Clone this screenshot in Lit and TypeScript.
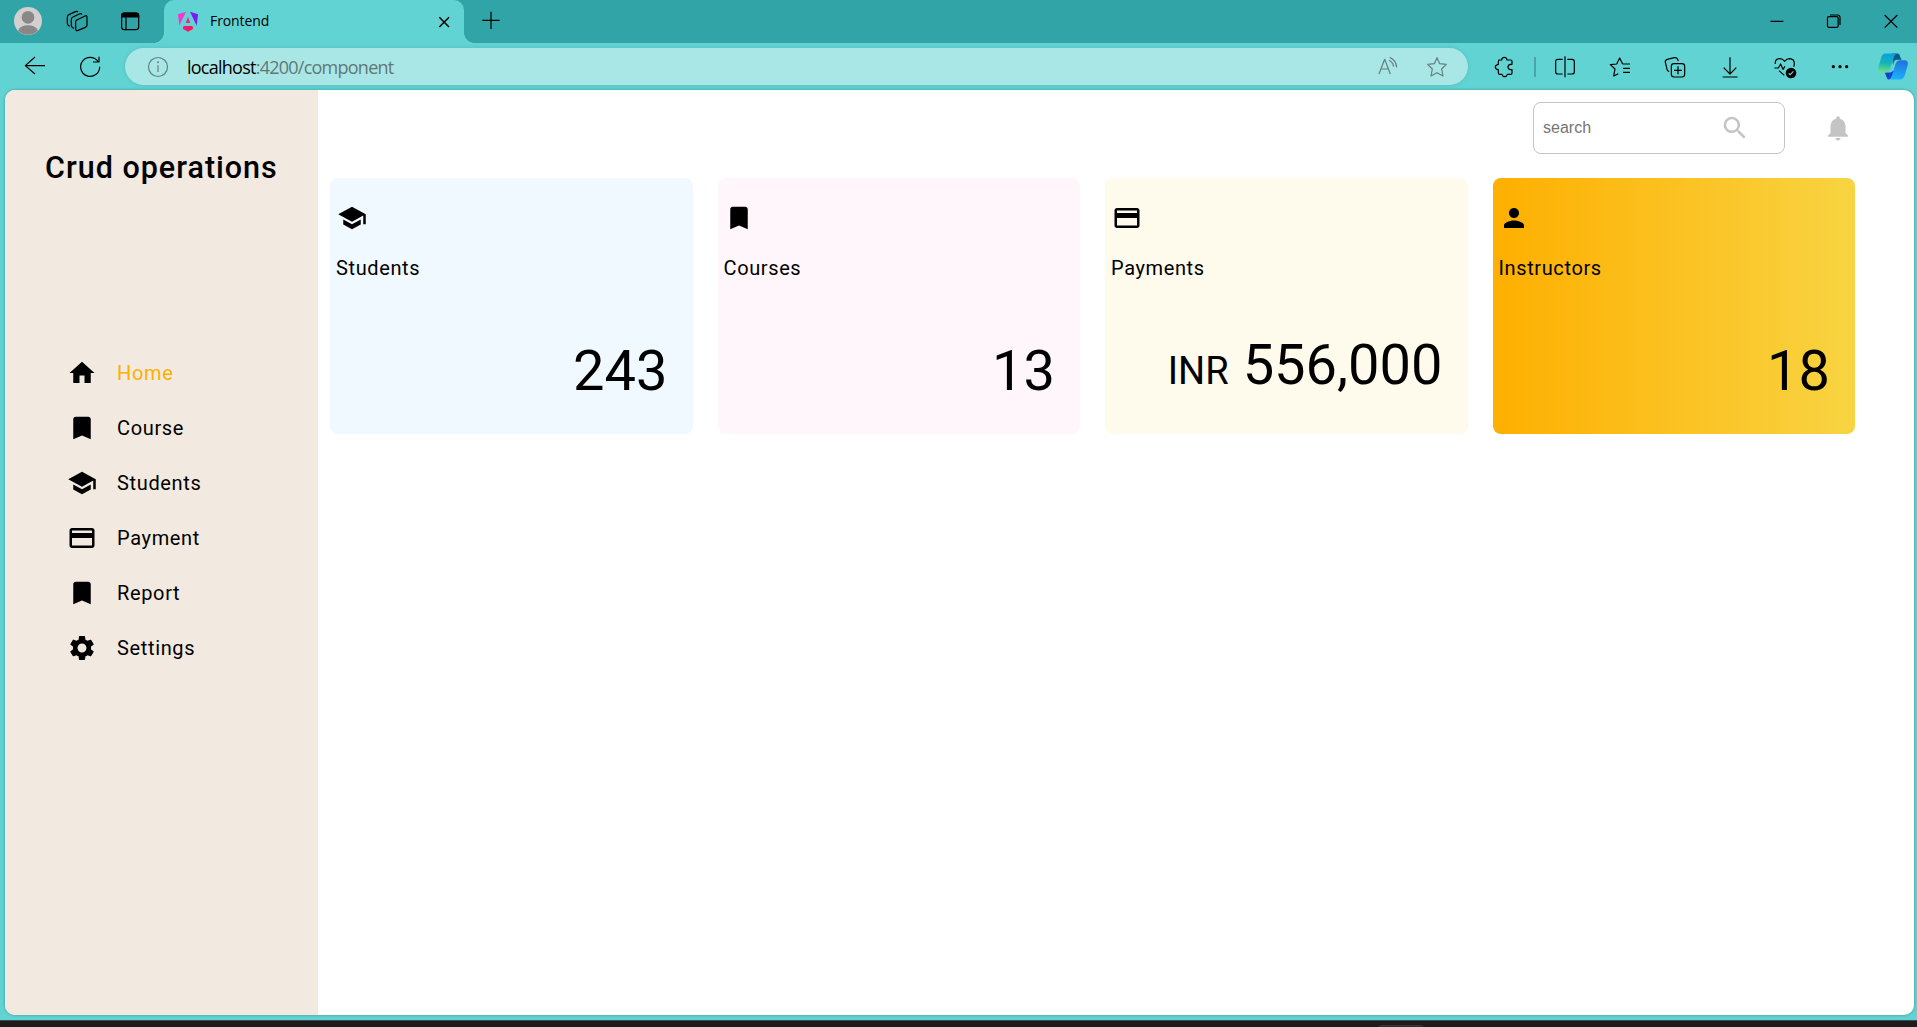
import { LitElement, html, svg, css } from "lit";
import { customElement, property } from "lit/decorators.js";
import { classMap } from "lit/directives/class-map.js";

// Material glyphs, 24-unit grid
const MATERIAL: Record<string, string> = {
  home: "M10 20v-6h4v6h5v-8h3L12 3 2 12h3v8z",
  bookmark: "M17 3H7c-1.1 0-1.99.9-1.99 2L5 21l7-3 7 3V5c0-1.1-.9-2-2-2z",
  school: "M5 13.18v4L12 21l7-3.82v-4L12 17l-7-3.82zM12 3L1 9l11 6 9-4.91V17h2V9L12 3z",
  card: "M20 4H4c-1.11 0-1.99.89-1.99 2L2 18c0 1.11.89 2 2 2h16c1.11 0 2-.89 2-2V6c0-1.11-.89-2-2-2zm0 14H4v-6h16v6zm0-10H4V6h16v2z",
  person: "M12 12c2.21 0 4-1.79 4-4s-1.79-4-4-4-4 1.79-4 4 1.79 4 4 4zm0 2c-2.67 0-8 1.34-8 4v2h16v-2c0-2.66-5.33-4-8-4z",
  settings:
    "M19.14 12.94c.04-.3.06-.61.06-.94 0-.32-.02-.64-.07-.94l2.03-1.58c.18-.14.23-.41.12-.61l-1.92-3.32c-.12-.22-.37-.29-.59-.22l-2.39.96c-.5-.38-1.03-.7-1.62-.94l-.36-2.54c-.04-.24-.24-.41-.48-.41h-3.84c-.24 0-.43.17-.47.41l-.36 2.54c-.59.24-1.13.57-1.62.94l-2.39-.96c-.22-.08-.47 0-.59.22L2.74 8.87c-.12.21-.08.47.12.61l2.03 1.58c-.05.3-.09.63-.09.94s.02.64.07.94l-2.03 1.58c-.18.14-.23.41-.12.61l1.92 3.32c.12.22.37.29.59.22l2.39-.96c.5.38 1.03.7 1.62.94l.36 2.54c.05.24.24.41.48.41h3.84c.24 0 .44-.17.47-.41l.36-2.54c.59-.24 1.13-.56 1.62-.94l2.39.96c.22.08.47 0 .59-.22l1.92-3.32c.12-.22.07-.47-.12-.61l-2.01-1.58zM12 15.6c-1.98 0-3.6-1.62-3.6-3.6s1.62-3.6 3.6-3.6 3.6 1.62 3.6 3.6-1.62 3.6-3.6 3.6z",
  search:
    "M15.5 14h-.79l-.28-.27C15.41 12.59 16 11.11 16 9.5 16 5.91 13.09 3 9.5 3S3 5.91 3 9.5 5.91 16 9.5 16c1.61 0 3.09-.59 4.23-1.57l.27.28v.79l5 4.99L20.49 19l-4.99-5zm-6 0C7.01 14 5 11.99 5 9.5S7.01 5 9.5 5 14 7.01 14 9.5 11.99 14 9.5 14z",
  bell: "M12 22c1.1 0 2-.9 2-2h-4c0 1.1.89 2 2 2zm6-6v-5c0-3.07-1.64-5.64-4.5-6.32V4c0-.83-.67-1.5-1.5-1.5s-1.5.67-1.5 1.5v.68C7.63 5.36 6 7.92 6 11v5l-2 2v1h16v-1l-2-2z",
};

// Browser chrome glyphs, 72-unit grid
const CHROME: Record<string, unknown> = {
  workspaces: svg`<path d="M15 52L11 50Q7 48 7 43V24Q7 19 12 17L31 8Q36 6 39 9M27 58L23 56Q19 54 19 49V31Q19 26 24 24L43 15Q48 12 51 16"/><path d="M37 32L60 21Q66 18 66 25V48Q66 53 61 55L39 64Q32 67 32 60V39Q32 34 37 32Z"/>`,
  tabs: svg`<rect x="11" y="12" width="51" height="50" rx="8"/><path d="M11 24V20Q11 12 19 12H54Q62 12 62 20V24Z" fill="currentColor"/><path d="M24 25V62"/>`,
  back: svg`<path d="M66 32H7M36 6L7 32L36 57"/>`,
  refresh: svg`<path d="M61 21A28.5 28.5 0 1 0 65 35M63 5V21H45"/>`,
  info: svg`<circle cx="36" cy="36" r="28.5"/><path d="M36 31V51"/><circle cx="36" cy="22" r="1.2" fill="currentColor"/>`,
  read: svg`<path d="M9 57L26 13L43 57M15 42H37"/><path d="M41 7Q60 15 62 37M39 16Q51 22 53 35"/>`,
  star: svg`<path d="M36 8L44 26L64 28L50 42L54 63L36 53L18 63L22 42L8 28L28 26Z"/>`,
  puzzle: svg`<path d="M20 15H29Q30 7 37 7Q44 7 45 15H56Q60 15 60 19V28H56Q48 29 48 36Q48 43 56 44H60V54Q60 58 56 58H46Q44 65 38 65Q32 65 30 58H24Q19 58 19 53V44Q10 43 10 36Q10 30 19 28V20Q19 15 24 15Z"/>`,
  split: svg`<path d="M36 4V67M29 13H15Q8 13 8 20V50Q8 57 15 57H29M43 13H57Q64 13 64 20V50Q64 57 57 57H43"/>`,
  favorites: svg`<path d="M44 27L35 9L26 27L7 29L21 42L17 63L31 56M44 27H66M45 40H66M45 52H66"/>`,
  collections: svg`<rect x="25" y="26" width="40" height="40" rx="8"/><path d="M45 34V58M33 46H57M18 50L13 46L7 22Q6 15 13 13L34 8Q41 7 44 13L46 18"/>`,
  download: svg`<path d="M36 7V57M17 38L36 57L55 38M14 66H59"/>`,
  heart: svg`<path d="M7 27Q5 11 20 11Q29 11 35 19Q41 11 50 11Q64 12 64 26Q64 31 62 35M4 39H16L23 27L30 43L36 34M18 47L34 61"/><circle cx="54" cy="54" r="16" fill="currentColor" stroke="none"/><path d="M47 55L52 59L61 49" stroke="#62d3d3"/>`,
  dots: svg`<g fill="currentColor" stroke="none"><circle cx="16" cy="35" r="4.8"/><circle cx="36" cy="35" r="4.8"/><circle cx="56" cy="35" r="4.8"/></g>`,
  closeTab: svg`<path d="M22 22L51 51M51 22L22 51" stroke-width="4.5"/>`,
  plus: svg`<path d="M36 11V63M10 37H62"/>`,
  minimize: svg`<path d="M16.500 37H55"/>`,
  restore: svg`<rect x="16.500" y="23" width="32" height="32" rx="4"/><path d="M24 18H47Q54 18 54 25V48"/>`,
  close: svg`<path d="M17 18L55 56M55 18L17 56"/>`,
};

@customElement("chrome-icon")
class ChromeIcon extends LitElement {
  @property() name = "";
  static styles = css`
    :host { display: block; flex: none; width: 24px; height: 24px; }
    svg { display: block; width: 24px; height: 24px; fill: none; stroke: currentColor; stroke-width: 3.6; stroke-linejoin: round; }
  `;
  render() {
    return html`<svg viewBox="0 0 72 72">${CHROME[this.name]}</svg>`;
  }
}

@customElement("material-icon")
class MaterialIcon extends LitElement {
  @property() name = "";
  static styles = css`
    :host { display: block; flex: none; width: 30px; height: 30px; }
    svg { display: block; width: 30px; height: 30px; fill: currentColor; }
  `;
  render() {
    return html`<svg viewBox="0 0 24 24"><path d=${MATERIAL[this.name]}></path></svg>`;
  }
}

@customElement("browser-titlebar")
class BrowserTitlebar extends LitElement {
  static styles = css`
    :host { display: flex; height: 43px; background: #31a4a8; color: #000; font-family: "Open Sans", "Noto Sans", sans-serif; }
    .left { display: flex; align-items: center; box-sizing: border-box; width: 164px; padding: 0 0 1px 14px; }
    .avatar { width: 28px; height: 28px; flex: none; }
    .ws { margin-left: 23px; }
    .ta { margin-left: 29px; }
    .tab { position: relative; box-sizing: border-box; display: flex; align-items: center; width: 300px; height: 43px; padding: 0 8px 0 14px; background: #62d3d3; border-radius: 10px 10px 0 0; }
    .tab::before, .tab::after { content: ""; position: absolute; bottom: 0; width: 10px; height: 10px; }
    .tab::before { left: -10px; background: radial-gradient(circle at 0 0, transparent 9.500px, #62d3d3 10px); }
    .tab::after { right: -10px; background: radial-gradient(circle at 100% 0, transparent 9.500px, #62d3d3 10px); }
    .logo { width: 20px; height: 21px; flex: none; }
    .name { flex: 1; margin-left: 12px; font-size: 14px; line-height: 20px; letter-spacing: -0.1px; padding-bottom: 1px; }
    .new { margin: 8px 0 0 15px; }
    .controls { display: flex; margin-left: auto; padding: 9px 14px 0 0; gap: 33px; }
  `;
  render() {
    return html`
      <div class="left">
        <svg class="avatar" viewBox="0 0 84 84">
          <clipPath id="c"><circle cx="42" cy="42" r="41"></circle></clipPath>
          <circle cx="42" cy="42" r="42" fill="#d2d0ce"></circle>
          <circle cx="42" cy="31" r="19" fill="#8a8886"></circle>
          <path clip-path="url(#c)" d="M12 84V71Q20 55 42 55Q64 55 72 71V84Z" fill="#8a8886"></path>
        </svg>
        <chrome-icon class="ws" name="workspaces"></chrome-icon>
        <chrome-icon class="ta" name="tabs"></chrome-icon>
      </div>
      <div class="tab">
        <svg class="logo" viewBox="0 0 60 63">
          <defs>
            <linearGradient id="r" x1="0" y1="0" x2="1" y2="0">
              <stop offset="0" stop-color="#f0148c"></stop><stop offset="1" stop-color="#ff1744"></stop>
            </linearGradient>
          </defs>
          <path d="M24 2L4 44L0 10Z" fill="#f637cf"></path>
          <path d="M36 2L60 10L56 44Z" fill="#7a1bf2"></path>
          <path d="M30 18L37 36H23Z" fill="#e0289f"></path>
          <path d="M17 45H43L46 53L30 62L14 53Z" fill="url(#r)"></path>
        </svg>
        <span class="name">Frontend</span>
        <chrome-icon name="closeTab"></chrome-icon>
      </div>
      <chrome-icon class="new" name="plus"></chrome-icon>
      <div class="controls">
        <chrome-icon name="minimize"></chrome-icon>
        <chrome-icon name="restore"></chrome-icon>
        <chrome-icon name="close"></chrome-icon>
      </div>
    `;
  }
}

@customElement("browser-toolbar")
class BrowserToolbar extends LitElement {
  static styles = css`
    :host { display: flex; align-items: center; box-sizing: border-box; height: 47px; padding: 0 9px 0 23px; background: #62d3d3; color: #000; font-family: "Open Sans", "Noto Sans", sans-serif; }
    .refresh { margin-left: 31px; }
    .address { display: flex; align-items: center; box-sizing: border-box; width: 1343px; height: 37px; margin-left: 23px; padding: 0 19px 0 20.500px; border-radius: 19px; background: #a8e7e5; color: #667f7f; box-shadow: 0 0 4px rgba(0, 60, 60, 0.14); }
    .url { flex: 1; margin-left: 17.500px; font-size: 18px; line-height: 26px; letter-spacing: -0.75px; color: #637777; }
    .host { color: #000; }
    .star { margin-left: 25px; }
    .puzzle { margin-left: 24px; }
    .divider { width: 2px; height: 20px; margin: 0 16.500px 0 18px; background: #4ba5a6; }
    .actions { display: flex; gap: 31.200px; }
    .copilot { width: 30px; height: 27px; margin-left: auto; }
  `;
  render() {
    return html`
      <chrome-icon name="back"></chrome-icon>
      <chrome-icon class="refresh" name="refresh"></chrome-icon>
      <div class="address">
        <chrome-icon name="info"></chrome-icon>
        <span class="url"><span class="host">localhost</span>:4200/component</span>
        <chrome-icon name="read"></chrome-icon>
        <chrome-icon class="star" name="star"></chrome-icon>
      </div>
      <chrome-icon class="puzzle" name="puzzle"></chrome-icon>
      <div class="divider"></div>
      <div class="actions">
        ${["split", "favorites", "collections", "download", "heart", "dots"].map((n) => html`<chrome-icon name=${n}></chrome-icon>`)}
      </div>
      <svg class="copilot" viewBox="0 0 90 80">
        <defs>
          <linearGradient id="a" x1="0.4" y1="0" x2="0.3" y2="1">
            <stop offset="0" stop-color="#0a9fe0"></stop><stop offset="0.5" stop-color="#13b5b5"></stop><stop offset="1" stop-color="#6fe08a"></stop>
          </linearGradient>
          <linearGradient id="b" x1="0.6" y1="0" x2="0.4" y2="1">
            <stop offset="0" stop-color="#2470dc"></stop><stop offset="1" stop-color="#18b4fa"></stop>
          </linearGradient>
        </defs>
        <path d="M42 1H60Q65 2 67 12L71 20H55Q50 20 48 26L45 36Z" fill="#0a5c86"></path>
        <path d="M20 58H37L52 50L40 74Q38 79 32 79Q27 78 25 70Z" fill="#1743cf"></path>
        <path d="M24 1H56Q50 3 47 13L37 46Q33 58 22 58H10Q-2 57 1 42L10 12Q13 1 24 1Z" fill="url(#a)"></path>
        <path d="M66 21H80Q92 22 89 36L80 67Q76 79 66 79H33Q39 78 42 68L52 34Q56 21 66 21Z" fill="url(#b)"></path>
      </svg>
    `;
  }
}

const NAV = [
  { icon: "home", label: "Home", active: true },
  { icon: "bookmark", label: "Course", active: false },
  { icon: "school", label: "Students", active: false },
  { icon: "card", label: "Payment", active: false },
  { icon: "bookmark", label: "Report", active: false },
  { icon: "settings", label: "Settings", active: false },
];

const CARDS = [
  { kind: "students", icon: "school", title: "Students", unit: "", value: "243" },
  { kind: "courses", icon: "bookmark", title: "Courses", unit: "", value: "13" },
  { kind: "payments", icon: "card", title: "Payments", unit: "INR", value: "556,000" },
  { kind: "instructors", icon: "person", title: "Instructors", unit: "", value: "18" },
];

@customElement("side-nav")
class SideNav extends LitElement {
  static styles = css`
    :host { display: block; box-sizing: border-box; flex: none; width: 313px; padding-top: 58px; background: #f2e9e1; }
    h1 { margin: 0 0 157px 40px; font-size: 30.500px; line-height: 40px; font-weight: 500; letter-spacing: 1px; white-space: nowrap; }
    .row { display: flex; align-items: center; gap: 20px; height: 55px; padding-left: 62px; font-size: 20px; letter-spacing: 0.65px; }
    .active { color: #feaf00; }
  `;
  render() {
    return html`
      <h1>Crud operations</h1>
      <nav>
        ${NAV.map((n) => html`<div class="row"><material-icon name=${n.icon}></material-icon><span class=${classMap({ active: n.active })}>${n.label}</span></div>`)}
      </nav>
    `;
  }
}

@customElement("dash-board")
class DashBoard extends LitElement {
  static styles = css`
    :host { display: block; flex: 1; }
    .top { display: flex; box-sizing: border-box; height: 88px; padding: 12px 61.500px 0 0; justify-content: flex-end; align-items: flex-start; color: #c4c4c4; }
    .search { display: flex; align-items: center; box-sizing: border-box; width: 252px; height: 52px; padding: 0 34px 0 9px; border: 1px solid #c4c4c4; border-radius: 8px; }
    .placeholder { flex: 1; font: 16px/20px "Liberation Sans", Arial, sans-serif; color: #757575; }
    .bell { margin: 10.500px 0 0 37.500px; }
    .cards { display: grid; grid-template-columns: repeat(4, 1fr); gap: 25px; width: 1525px; margin-left: 12px; }
    .card { display: flex; flex-direction: column; box-sizing: border-box; height: 256px; padding: 25px 25px 0 5px; border-radius: 8px; }
    .students { background: #f0f9ff; }
    .courses { background: #fef6fb; }
    .payments { background: #fefbec; }
    .instructors { background: linear-gradient(90deg, #feaf00 0%, #f8d442 100%); }
    .glyph { margin-left: 1.500px; }
    .title { margin: 23px 0 0 1px; font-size: 20px; line-height: 24px; letter-spacing: 0.62px; }
    .amount { display: flex; justify-content: flex-end; align-items: baseline; margin-top: 58px; font-size: 56px; line-height: 66px; }
    .payments .amount { margin-top: 52px; }
    .unit { font-size: 38px; margin-right: 14px; }
  `;
  render() {
    return html`
      <div class="top">
        <div class="search"><span class="placeholder">search</span><material-icon name="search"></material-icon></div>
        <material-icon class="bell" name="bell"></material-icon>
      </div>
      <div class="cards">
        ${CARDS.map(
          (c) => html`<div class="card ${c.kind}">
            <material-icon class="glyph" name=${c.icon}></material-icon>
            <div class="title">${c.title}</div>
            <div class="amount">${c.unit ? html`<span class="unit">${c.unit}</span>` : ""}<span>${c.value}</span></div>
          </div>`
        )}
      </div>
    `;
  }
}

@customElement("app-root")
class AppRoot extends LitElement {
  static styles = css`
    :host { display: flex; flex-direction: column; width: 1917px; height: 1027px; overflow: hidden; background: #62d3d3; color: #000; font-family: Roboto, sans-serif; }
    .page { display: flex; flex: 1; margin: 0 3px 5px 5px; border-radius: 10px; overflow: hidden; background: #fff; box-shadow: 0 0 3px rgba(0, 70, 70, 0.45); }
    .taskbar { display: flex; box-sizing: border-box; height: 7px; padding: 4px 0 0 1378px; border-top: 1px solid #3c4a4c; background: #1c1c1c; overflow: hidden; }
    .task { width: 44px; height: 20px; border: 1px solid #3a3a3a; border-radius: 4px; background: #2b2b2b; }
  `;
  render() {
    return html`
      <browser-titlebar></browser-titlebar>
      <browser-toolbar></browser-toolbar>
      <div class="page">
        <side-nav></side-nav>
        <dash-board></dash-board>
      </div>
      <div class="taskbar"><div class="task"></div></div>
    `;
  }
}
